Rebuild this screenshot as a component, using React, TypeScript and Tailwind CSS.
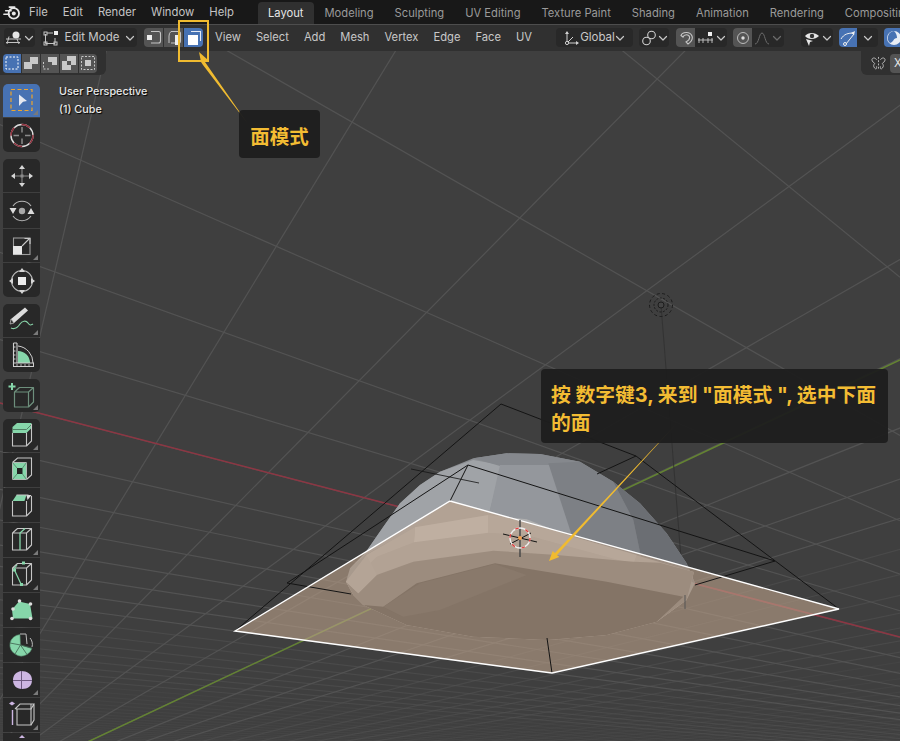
import React from "react";

const menuItems = ["File", "Edit", "Render", "Window", "Help"];
const tabs = ["Layout", "Modeling", "Sculpting", "UV Editing", "Texture Paint", "Shading", "Animation", "Rendering", "Compositing"];
const editMenus = ["View", "Select", "Add", "Mesh", "Vertex", "Edge", "Face", "UV"];

const VP_H = [1548, 806];
const VP_V = [-72, 817];

const Chevron = ({ color = "#c8c8c8" }: { color?: string }) => (
  <svg width="10" height="10" viewBox="0 0 10 10" className="shrink-0">
    <path d="M1.5 3.5 5 7l3.5-3.5" fill="none" stroke={color} strokeWidth="1.2" strokeLinecap="round" strokeLinejoin="round" />
  </svg>
);

const Cube = ({ color = "#c6c6c6" }: { color?: string }) => (
  <path d="M9.5 10h14v17h-14zM9.5 10l5-4.5h14l-5 4.5M23.5 27l5-5V5.5" fill="none" stroke={color} strokeWidth="1.1" strokeLinejoin="round" />
);

const ToolIcon = ({ children }: { children: React.ReactNode }) => (
  <svg width="37" height="34" viewBox="0 0 37 34" className="block">
    {children}
  </svg>
);

const Tool = ({ h = "h-[34px]", active, corner, children }: { h?: string; active?: boolean; corner?: boolean; children: React.ReactNode }) => (
  <div className={`relative w-[37px] overflow-hidden ${h} ${active ? "bg-[#4772b3]" : "bg-[#282828]"}`}>
    <ToolIcon>{children}</ToolIcon>
    {corner && <div className="absolute bottom-[2px] right-[2px] h-0 w-0 border-b-[5px] border-l-[5px] border-b-[#7a7a7a] border-l-transparent" />}
  </div>
);

const Group = ({ children }: { children: React.ReactNode }) => (
  <div className="flex flex-col gap-px overflow-hidden rounded-[5px]">{children}</div>
);

const Toolbar = () => (
  <div className="absolute left-[3px] top-[33px] flex flex-col gap-[7px]">
    <Group>
      <Tool h="h-[33px]" active corner>
        <rect x="8" y="5.5" width="21" height="21" fill="none" stroke="#eda52d" strokeWidth="1.2" strokeDasharray="4 2.5" />
        <path d="M16 10.5l8 6.5-4 .8-4 4.2z" fill="#e4e8f0" />
      </Tool>
      <Tool>
        <circle cx="19" cy="17.5" r="11" fill="none" stroke="#ddd" strokeWidth="1.4" />
        <circle cx="19" cy="17.5" r="11" fill="none" stroke="#8f2f3c" strokeWidth="1.5" strokeDasharray="9 8" />
        <path d="M19 9v5.5M19 20.5V26M10.5 17.5H16M22 17.5h5.5" stroke="#8a8a8a" strokeWidth="1.5" />
      </Tool>
    </Group>
    <Group>
      <Tool h="h-[33px]">
        <path d="M19 6l3 4h-6zM19 28l3-4h-6zM8 17l4-3v6zM30 17l-4-3v6z" fill="#d6d6d6" />
        <path d="M12 17h14M19 10v14" stroke="#8c8c8c" strokeWidth="1.1" />
        <rect x="17.5" y="15.5" width="3" height="3" fill="#8c8c8c" />
      </Tool>
      <Tool h="h-[35px]">
        <path d="M10 13a11 11 0 0 1 18 0M28 23a11 11 0 0 1-18 0" fill="none" stroke="#b4b4b4" strokeWidth="1.1" />
        <path d="M6.5 15h7l-3.5 6zM31.5 21h-7l3.5-6z" fill="#dcdcdc" />
        <circle cx="19" cy="18" r="3.2" fill="#a8a8a8" />
      </Tool>
      <Tool h="h-[33px]" corner>
        <rect x="10.5" y="9" width="16.5" height="16.5" fill="none" stroke="#9c9c9c" strokeWidth="1.1" />
        <rect x="10" y="17" width="9" height="8.5" fill="#e6e6e6" />
        <path d="M19 17l7-7M21.5 9.5H27V15" fill="none" stroke="#c8c8c8" strokeWidth="1.1" />
      </Tool>
      <Tool>
        <rect x="15" y="14" width="8" height="8" fill="#ececec" />
        <circle cx="19" cy="18" r="10.5" fill="none" stroke="#b8b8b8" strokeWidth="1.1" />
        <path d="M19 5l3 4h-6zM19 31l3-4h-6zM6 18l4-3v6zM32 18l-4-3v6z" fill="#d6d6d6" />
      </Tool>
    </Group>
    <Group>
      <Tool h="h-[33px]" corner>
        <path d="M8 15L22 3.500l3 3L11 19z" fill="#dcdcdc" />
        <path d="M8 15l3 4-4 1z" fill="#333" stroke="#ddd" strokeWidth=".6" />
        <path d="M8 24c4 2 7-1 9-4s6-4 8-1 3 2 5 1" fill="none" stroke="#86cfa6" strokeWidth="1.2" />
      </Tool>
      <Tool>
        <path d="M15 25V13A12 12 0 0 1 27 25z" fill="#86d6aa" />
        <path d="M15 8A17 17 0 0 1 30 25" fill="none" stroke="#cfcfcf" strokeWidth="1" />
        <path d="M10.500 5v22M14 5v22" stroke="#cfcfcf" strokeWidth="1.100" />
        <path d="M10.500 5H14M10.500 9h2M10.500 13h2M10.500 17h2M10.500 21h2" stroke="#cfcfcf" strokeWidth="1" />
        <rect x="10.500" y="25" width="20" height="3.500" fill="#282828" stroke="#cfcfcf" strokeWidth="1" />
        <path d="M14 26v2M18 26v2M22 26v2M26 26v2" stroke="#cfcfcf" strokeWidth=".8" />
      </Tool>
    </Group>
    <Group>
      <Tool h="h-[33px]" corner>
        <path d="M9 4v7M5.500 7.500h7" stroke="#86d6aa" strokeWidth="2" />
        <path d="M11.500 13h14v15h-14zM11.500 13l5-4.500h14l-5 4.500M25.500 28l5-5V8.500" fill="none" stroke="#6d8f7c" strokeWidth="1.2" strokeLinejoin="round" />
      </Tool>
    </Group>
    <Group>
      <Tool h="h-[33px]" corner>
        <path d="M9.500 8l4.500-4h14.500v5l-5 5H9.500z" fill="#86d6aa" />
        <path d="M9.500 10.500h14l5-5" fill="none" stroke="#4f7f64" strokeWidth="1" />
        <path d="M9.500 14v13h14V14M23.500 27l5-5V5" fill="none" stroke="#c6c6c6" strokeWidth="1.100" />
      </Tool>
      <Tool>
        <path d="M9.500 9.500l5-4.500h14v17l-5 4.500" fill="none" stroke="#c6c6c6" strokeWidth="1.100" />
        <path d="M9.500 9.500h14v17h-14z" fill="#86d6aa" stroke="#c6c6c6" strokeWidth=".8" />
        <rect x="14" y="15" width="5.500" height="6" fill="#222" />
        <path d="M9.500 9.500L14 15M23.500 9.500L19.500 15M9.500 26.500L14 21M23.500 26.500L19.500 21" stroke="#4f7f64" strokeWidth=".8" />
      </Tool>
      <Tool>
        <path d="M9.500 13l4-6h10l-2 6z" fill="#86d6aa" />
        <path d="M23.500 7h5l-4 5z" fill="#dcdcdc" />
        <path d="M9.500 13v15h14V13M23.500 28l5-5V8M13.500 7h12" fill="none" stroke="#c6c6c6" strokeWidth="1.100" />
      </Tool>
      <Tool corner>
        <Cube />
        <path d="M17 27V10l5-4.500" fill="none" stroke="#86d6aa" strokeWidth="1.300" />
      </Tool>
      <Tool corner>
        <Cube />
        <path d="M14 7L11 11l7 15" fill="none" stroke="#86d6aa" strokeWidth="1.200" />
        <rect x="19" y="3.500" width="3" height="3" fill="#86d6aa" />
        <rect x="10" y="10.500" width="3" height="3" fill="#86d6aa" />
        <rect x="17" y="25" width="3" height="3" fill="#86d6aa" />
      </Tool>
      <Tool>
        <path d="M10 25.500l-1-9 7-8 11 2.500 2.500 14.500z" fill="#86d6aa" />
        <circle cx="16.500" cy="8" r="1.800" fill="#ddd" />
        <circle cx="27.500" cy="11" r="1.800" fill="#ddd" />
        <circle cx="9" cy="25.500" r="1.800" fill="#ddd" />
        <circle cx="27.500" cy="25.500" r="1.800" fill="#ddd" />
        <circle cx="10" cy="16" r="1.800" fill="#ddd" />
      </Tool>
      <Tool>
        <path d="M17.500 17L17 6.500A11 11 0 0 0 7 15a11 11 0 0 0 5 11 11 11 0 0 0 12 .500 11 11 0 0 0 5-6z" fill="#86d6aa" stroke="#4d7a62" strokeWidth=".6" />
        <path d="M17.500 17L7 15M17.500 17L12 26M17.500 17l6.500 9.500M17.500 17L29 20" stroke="#3f5f4e" strokeWidth=".8" />
        <path d="M17 6h6l1 10M27 10c2 2 3 6 2 9" fill="none" stroke="#bbb" strokeWidth="1" />
      </Tool>
      <Tool corner>
        <path d="M10 17c0-5 3-8 8-9 6 0 11 3 11 9 0 6-4 9-10 9-6 0-9-4-9-9z" fill="#cdb6e2" />
        <path d="M10 17.500h19M18.500 8v18" stroke="#6e5a80" strokeWidth="1" />
      </Tool>
      <Tool corner>
        <path d="M9.500 12l0 15" stroke="#cdb6e2" strokeWidth="1.400" />
        <path d="M14 11v16h14V6" fill="none" stroke="#c6c6c6" strokeWidth="1.100" />
        <path d="M12 11l5-5h14l-3 5H13M28 27l3-5V6" fill="none" stroke="#c6c6c6" strokeWidth="1.100" />
        <path d="M9 3.500l3 2-3 2-3-2z" fill="#cdb6e2" />
      </Tool>
      <Tool>
        <path d="M19 2l3 3h-6z" fill="#cdb6e2" />
      </Tool>
    </Group>
  </div>
);

const gridH = Array.from({ length: 46 }, (_, i) => 5 - i);
const gridV = Array.from({ length: 36 }, (_, i) => i);

const Scene = () => (
  <svg className="absolute inset-0" width="900" height="690" viewBox="0 51 900 690">
    {/* grid: both families run to a vanishing point just under the picture */}
    {gridH.map((k) => {
      const x400 = -12 + 212.5 * k;
      const s = (VP_H[1] - 400) / (VP_H[0] - x400);
      return (
        <line key={`h${k}`} x1={-100} y1={VP_H[1] + s * (-100 - VP_H[0])} x2={900} y2={VP_H[1] + s * (900 - VP_H[0])} stroke="#535353" strokeWidth="1.2" opacity={k > -8 ? 1 : k > -16 ? 0.55 : 0.25} />
      );
    })}
    {gridV.map((k) => {
      const x400 = 25 + 157.5 * k;
      const s = (VP_V[1] - 400) / (x400 - VP_V[0]);
      return (
        <line key={`v${k}`} x1={VP_V[0]} y1={VP_V[1]} x2={1400} y2={VP_V[1] - s * (1400 - VP_V[0])} stroke="#535353" strokeWidth="1.2" opacity={k < 9 ? 1 : k < 16 ? 0.55 : 0.25} />
      );
    })}
    <line x1="0" y1="403" x2="900" y2="637" stroke="#8d3643" strokeWidth="1.5" />
    <line x1={VP_V[0]} y1={VP_V[1]} x2="900" y2="360" stroke="#648432" strokeWidth="1.5" />

    {/* light */}
    <line x1="661" y1="305" x2="684" y2="596" stroke="#333" strokeWidth="1" />
    <g fill="none" stroke="#1c1c1c">
      <circle cx="661" cy="305" r="11.500" strokeDasharray="3 2.500" />
      <circle cx="661" cy="305" r="7" strokeDasharray="2 1.500" />
      <circle cx="661" cy="305" r="3" fill="#444" />
    </g>

    {/* dome, numbers are 3x crop coordinates */}
    <g transform="translate(340 440) scale(0.3333)">
      <polygon points="18,425 30,385 75,340 130,260 180,190 240,135 300,95 400,55 500,40 600,42 720,65 820,125 900,190 980,280 1040,370 1065,430 1040,480 950,545 800,585 620,600 400,590 200,555 70,495 40,465" fill="#8b8e92" />
      <polygon points="30,385 75,340 130,260 180,190 240,135 300,95 400,60 485,75 445,230 225,265 75,345" fill="#a0a3a7" />
      <polygon points="400,55 500,40 600,42 720,65 640,80 480,78" fill="#85888d" />
      <polygon points="480,75 630,75 710,300 445,232" fill="#94979c" />
      <polygon points="625,70 720,65 820,125 880,240 905,360 700,300" fill="#7d8085" />
      <polygon points="820,125 900,190 980,280 1040,370 1065,430 905,360 880,240" fill="#6b6e73" />
      <polygon points="18,425 80,345 225,262 330,183 1062,396 1040,480 950,545 800,585 620,600 400,590 200,555 70,495 40,465" fill="#a2a2a2" />
      <polygon points="225,262 445,225 445,278 222,307" fill="#c4c4c4" />
      <polygon points="445,225 560,238 690,288 890,345 880,372 560,285 445,278" fill="#b0b0b0" />
      <polygon points="80,345 225,262 222,307 110,350 50,410" fill="#b0b0b0" />
      <polygon points="18,425 55,460 110,405 220,365 460,332 650,345 880,365 960,368 1062,396 1040,480 950,545 800,585 620,600 400,590 200,555 70,495 40,465" fill="#6c6c6c" />
      <polygon points="18,425 80,345 110,405 55,460" fill="#a8a8a8" />
      <polygon points="70,495 130,500 230,430 465,370 800,425 1030,470 950,545 800,585 620,600 400,590 200,555" fill="#303030" />
      <polygon points="130,500 240,430 465,372 560,405 300,510 190,530" fill="#3c3c3c" />
    </g>

    {/* selected face */}
    <polygon points="235,631 450,501 839,609 552,673" fill="rgb(188,162,138)" opacity="0.6" />

    {/* cube wire */}
    <g fill="none" stroke="#141414" strokeWidth="1">
      <path d="M235 631L501 404L636 456L839 609" />
      <path d="M287 583L468 465L775 561L695 585M468 465L450 501M287 583L351 594" />
      <path d="M411 469L479 483" opacity="0.8" />
      <path d="M636 456L597 474" />
      <path d="M552 673L547 638" />
      <path d="M685 595v14" stroke="#555" />
    </g>
    <polygon points="235,631 450,501 839,609 552,673" fill="none" stroke="#fff" strokeWidth="1.4" />

    {/* 3d cursor */}
    <path d="M520 520v37" stroke="#4a4a4a" strokeWidth="1.500" />
    <path d="M503 534L537 542M510 544L531 533" stroke="#141414" strokeWidth="1" />
    <circle cx="520" cy="538" r="10" fill="none" stroke="#eee" strokeWidth="1.300" />
    <circle cx="520" cy="538" r="10" fill="none" stroke="#e23b3b" strokeWidth="1.300" strokeDasharray="3.500 7" />
    <circle cx="520" cy="538" r="2" fill="#f0a050" />

    {/* call-out arrows */}
    <polygon points="199,52 208,60 205,62 248,124 203,65 201,62" fill="#f0bb30" />
    <polygon points="549,561 552.700,551 555,553 678,422 557,555 559.300,557" fill="#f0bb30" />
  </svg>
);

const Btn = ({ className = "", children }: { className?: string; children: React.ReactNode }) => (
  <div className={`flex h-[19px] shrink-0 items-center justify-center whitespace-nowrap ${className}`}>{children}</div>
);

const ModeIcon = ({ mode }: { mode: number }) => (
  <svg width="16" height="16" viewBox="0 0 16 16">
    <path d={mode === 2 ? "M5 1.500h9.500V11" : "M5 1.500h7.500a2 2 0 0 1 2 2V11a2 2 0 0 1-2 2H5"} fill="none" stroke={mode === 2 ? "#e4eaf4" : "#c4c4c4"} strokeWidth="1.100" />
    {mode === 0 && <rect x="1" y="5" width="5" height="5" fill="#eee" />}
    {mode === 1 && <rect x="9" y="5" width="3.500" height="10" fill="#eee" />}
    {mode === 1 && <path d="M5 1.500Q3 3 3 6v7" fill="none" stroke="#c4c4c4" />}
    {mode === 2 && <rect x="2" y="5" width="10" height="10" fill="#fff" />}
  </svg>
);

const SelectIcon = ({ n }: { n: number }) => (
  <svg width="16" height="16" viewBox="0 0 16 16">
    {n === 0 && <rect x="2" y="2" width="12" height="12" fill="none" stroke="#fff" strokeDasharray="2 1.500" />}
    {n === 1 && <path d="M1 7h6V2h8v7H9v5H1z" fill="#c8c8c8" />}
    {n === 2 && (
      <>
        <path d="M1.500 7v7h7" fill="none" stroke="#c8c8c8" strokeDasharray="2 1.500" />
        <path d="M6 2h9v8H10V7H6z" fill="#c8c8c8" />
      </>
    )}
    {n === 3 && <path d="M6 1h9v9h-5v5H1V6h5zM6 6v4h4V6z" fill="#c8c8c8" fillRule="evenodd" />}
    {n === 4 && (
      <>
        <rect x="1.500" y="1.500" width="13" height="13" fill="none" stroke="#c8c8c8" strokeDasharray="2 1.500" />
        <rect x="5" y="5" width="6" height="6" fill="#c8c8c8" />
      </>
    )}
  </svg>
);

const Header = () => (
  <div className="flex h-[26px] shrink-0 items-center overflow-hidden bg-[#303030] pb-[1px] pl-[4px] text-[11.2px] text-[#c8c8c8]">
    <Btn className="w-[31px] gap-px rounded bg-[#282828]">
      <svg width="18" height="16" viewBox="0 0 18 16">
        <circle cx="11" cy="5" r="3.500" fill="#e6e6e6" />
        <path d="M1 9h15M4 6.500L2 14M12 9l2 5M1 12.500h14" fill="none" stroke="#c4c4c4" strokeWidth="1" />
      </svg>
      <Chevron />
    </Btn>
    <Btn className="ml-[6px] w-[96px] gap-[6px] rounded bg-[#282828] text-[11.5px]">
      <svg width="16" height="16" viewBox="0 0 16 16">
        <path d="M2.500 4v9.500H12V8M4 3h6" fill="none" stroke="#c4c4c4" strokeWidth="1" />
        <rect x="1" y="2" width="3" height="3" fill="none" stroke="#c4c4c4" />
        <rect x="1" y="12" width="3" height="3" fill="none" stroke="#c4c4c4" />
        <rect x="11" y="12" width="3" height="3" fill="none" stroke="#c4c4c4" />
        <rect x="11" y="1" width="4" height="4" fill="#eee" />
      </svg>
      <span>Edit Mode</span>
      <Chevron />
    </Btn>
    <div className="ml-[7px] flex shrink-0 gap-px overflow-hidden rounded">
      <Btn className="w-[19px] bg-[#545454]">
        <ModeIcon mode={0} />
      </Btn>
      <Btn className="w-[19px] bg-[#545454]">
        <ModeIcon mode={1} />
      </Btn>
      <Btn className="w-[19px] bg-[#4772b3]">
        <ModeIcon mode={2} />
      </Btn>
    </div>
    <div className="ml-[12px] flex w-[315px] shrink-0 gap-[15px]">
      {editMenus.map((m) => (
        <span key={m}>{m}</span>
      ))}
    </div>
    <Btn className="ml-[26px] w-[77px] justify-between rounded bg-[#282828] px-[3px] text-[11.5px]">
      <svg width="16" height="16" viewBox="0 0 16 16">
        <path d="M3 2v11h11M3 13L9 7" fill="none" stroke="#d0d0d0" strokeWidth="1" />
        <path d="M3 1l2 3H1zM15 13l-3 2v-4z" fill="#d0d0d0" />
        <circle cx="3" cy="13" r="1.600" fill="#282828" stroke="#d0d0d0" />
      </svg>
      <span>Global</span>
      <Chevron />
    </Btn>
    <Btn className="ml-[6px] w-[30px] gap-px rounded bg-[#282828]">
      <svg width="16" height="16" viewBox="0 0 16 16">
        <circle cx="5.500" cy="11" r="3.800" fill="none" stroke="#d0d0d0" strokeWidth="1.100" />
        <circle cx="10.500" cy="5" r="3.800" fill="none" stroke="#d0d0d0" strokeWidth="1.100" />
      </svg>
      <Chevron />
    </Btn>
    <div className="ml-[7px] flex w-[51px] shrink-0 overflow-hidden rounded bg-[#282828]">
      <Btn className="w-[19px] bg-[#545454]">
        <svg width="16" height="16" viewBox="0 0 16 16">
          <path d="M3 5.500C4 2 12 1 14 6c1 3-1 6-4 8l-2-2c2-1 4-3 3.500-5C11 4 6 4 5 7z" fill="none" stroke="#c8c8c8" strokeWidth="1.100" />
        </svg>
      </Btn>
      <Btn className="flex-1 gap-px">
        <svg width="18" height="16" viewBox="0 0 18 16">
          <path d="M1 10h15M2 8v5M6 8v5M11 8v5M15 8v5" fill="none" stroke="#c8c8c8" strokeWidth=".9" />
          <rect x="11" y="2" width="4" height="4" fill="#eee" />
        </svg>
        <Chevron />
      </Btn>
    </div>
    <div className="ml-[6px] flex w-[51px] shrink-0 overflow-hidden rounded bg-[#282828]">
      <Btn className="w-[19px] bg-[#545454]">
        <svg width="14" height="14" viewBox="0 0 14 14">
          <circle cx="7" cy="7" r="5.500" fill="none" stroke="#bbb" strokeWidth="1" />
          <circle cx="7" cy="7" r="1.700" fill="#ddd" />
        </svg>
      </Btn>
      <Btn className="flex-1 gap-[2px]">
        <svg width="16" height="14" viewBox="0 0 16 14">
          <path d="M1 13c4 0 4-11 7-11s3 11 7 11" fill="none" stroke="#6c6c6c" strokeWidth="1" />
        </svg>
        <Chevron color="#6c6c6c" />
      </Btn>
    </div>
    <Btn className="ml-[17px] w-[32px] gap-px rounded bg-[#282828]">
      <svg width="18" height="16" viewBox="0 0 18 16">
        <path d="M2 6c3-4 10-4 14 0-4 4-11 4-14 0z" fill="#e6e6e6" />
        <circle cx="9" cy="6" r="2.200" fill="#333" />
        <path d="M3 9l7 2-3 1-1 4z" fill="#e6e6e6" />
      </svg>
      <Chevron />
    </Btn>
    <div className="ml-[6px] flex w-[39px] shrink-0 overflow-hidden rounded bg-[#282828]">
      <Btn className="w-[18px] bg-[#4772b3]">
        <svg width="16" height="16" viewBox="0 0 16 16">
          <path d="M1 9c3-5 7-6 13-6M6 14l8-10" fill="none" stroke="#f0f0f0" strokeWidth="1" />
          <path d="M15 1l-1 4-3-2z" fill="#f0f0f0" />
          <circle cx="5" cy="14" r="1.500" fill="none" stroke="#f0f0f0" />
        </svg>
      </Btn>
      <Btn className="flex-1">
        <Chevron />
      </Btn>
    </div>
    <Btn className="ml-[6px] w-[30px] justify-start rounded bg-[#4772b3] pl-[2px]">
      <svg width="16" height="16" viewBox="0 0 16 16">
        <circle cx="8" cy="8" r="7" fill="#e8edf5" />
        <path d="M8 1a7 7 0 0 0-4 12c4-1 3-5 7-5 0-3-1-5-3-7z" fill="#4772b3" />
      </svg>
    </Btn>
  </div>
);

export default function App() {
  return (
    <div className="relative flex h-[741px] w-[900px] flex-col overflow-hidden bg-[#3f3f3f] font-['Inter','Noto_Sans_CJK_SC',sans-serif] text-[11.3px]">
      <div className="flex h-[25px] shrink-0 items-end overflow-hidden border-b border-[#4d4d4d] bg-[#181818] text-[#c4c4c4]">
        <div className="flex h-[24px] w-[29px] shrink-0 items-center justify-start pl-[3px]">
          <svg width="18" height="15" viewBox="0 0 20 16">
            <circle cx="12" cy="9" r="5.800" fill="none" stroke="#e8e8e8" strokeWidth="2" />
            <circle cx="12" cy="9" r="2.200" fill="#e8e8e8" />
            <path d="M1 10h6M3 6h6M7 2h6" stroke="#e8e8e8" strokeWidth="1.800" strokeLinecap="round" />
          </svg>
        </div>
        <div className="flex h-[24px] w-[204px] shrink-0 items-center gap-[15px]">
          {menuItems.map((m) => (
            <span key={m}>{m}</span>
          ))}
        </div>
        <div className="ml-[25px] flex h-[22px] shrink-0 gap-px text-[11.2px]">
          {tabs.map((t, i) => (
            <div key={t} className={`flex items-center rounded-t px-[10px] ${i === 0 ? "bg-[#303030] text-[#e6e6e6]" : "text-[#9a9a9a]"}`}>
              {t}
            </div>
          ))}
        </div>
      </div>
      <Header />
      <div className="relative flex-1 overflow-hidden">
        <Scene />
        <div className="absolute left-0 top-0 flex h-[24px] w-[106px] items-center gap-px rounded-br-md bg-[#303030] pl-[3px]">
          {[0, 1, 2, 3, 4].map((n) => (
            <div key={n} className={`flex h-[19px] w-[18px] items-center justify-center ${n === 0 ? "rounded-l bg-[#4772b3]" : "bg-[#545454]"} ${n === 4 ? "rounded-r" : ""}`}>
              <SelectIcon n={n} />
            </div>
          ))}
        </div>
        <div className="absolute right-0 top-0 flex h-[24px] w-[39px] items-center justify-end gap-[4px] rounded-bl-md bg-[#303030]">
          <svg width="15" height="15" viewBox="0 0 16 16">
            <path d="M8 1v14" stroke="#bbb" strokeDasharray="2 1.500" />
            <path d="M6 4C4 1 1 2 1 4c0 2 2 3 3 4-1 1-2 3 0 5s2 0 2-2M10 4c2-3 5-2 5 0 0 2-2 3-3 4 1 1 2 3 0 5s-2 0-2-2" fill="none" stroke="#bbb" strokeWidth="1" />
          </svg>
          <div className="flex h-[19px] w-[10px] items-center overflow-hidden rounded-l bg-[#545454] pl-[4px] text-[#e6e6e6]">X</div>
        </div>
        <Toolbar />
        <div className="absolute left-[59px] top-[32px] text-[10.8px] font-medium leading-[18px] text-[#e8e8e8] [text-shadow:1px_1px_1px_#000]">
          <div>User Perspective</div>
          <div>(1) Cube</div>
        </div>
        <div className="absolute left-[239px] top-[59px] flex h-[48px] w-[81px] items-center justify-center rounded bg-[#1e1e1e]/95 pt-[8px] text-[19.5px] font-bold text-[#f3bc33]">
          面模式
        </div>
        <div className="absolute left-[541px] top-[318px] h-[74px] w-[347px] whitespace-nowrap rounded bg-[#1e1e1e]/95 pl-[10px] pt-[12px] text-[19.8px] font-bold leading-[28px] text-[#f3bc33]">
          <div>按 数字键3, 来到 "面模式 ", 选中下面</div>
          <div>的面</div>
        </div>
      </div>
      <div className="absolute left-[178px] top-[20px] h-[42px] w-[31px] border-2 border-[#f0bb30]" />
    </div>
  );
}
